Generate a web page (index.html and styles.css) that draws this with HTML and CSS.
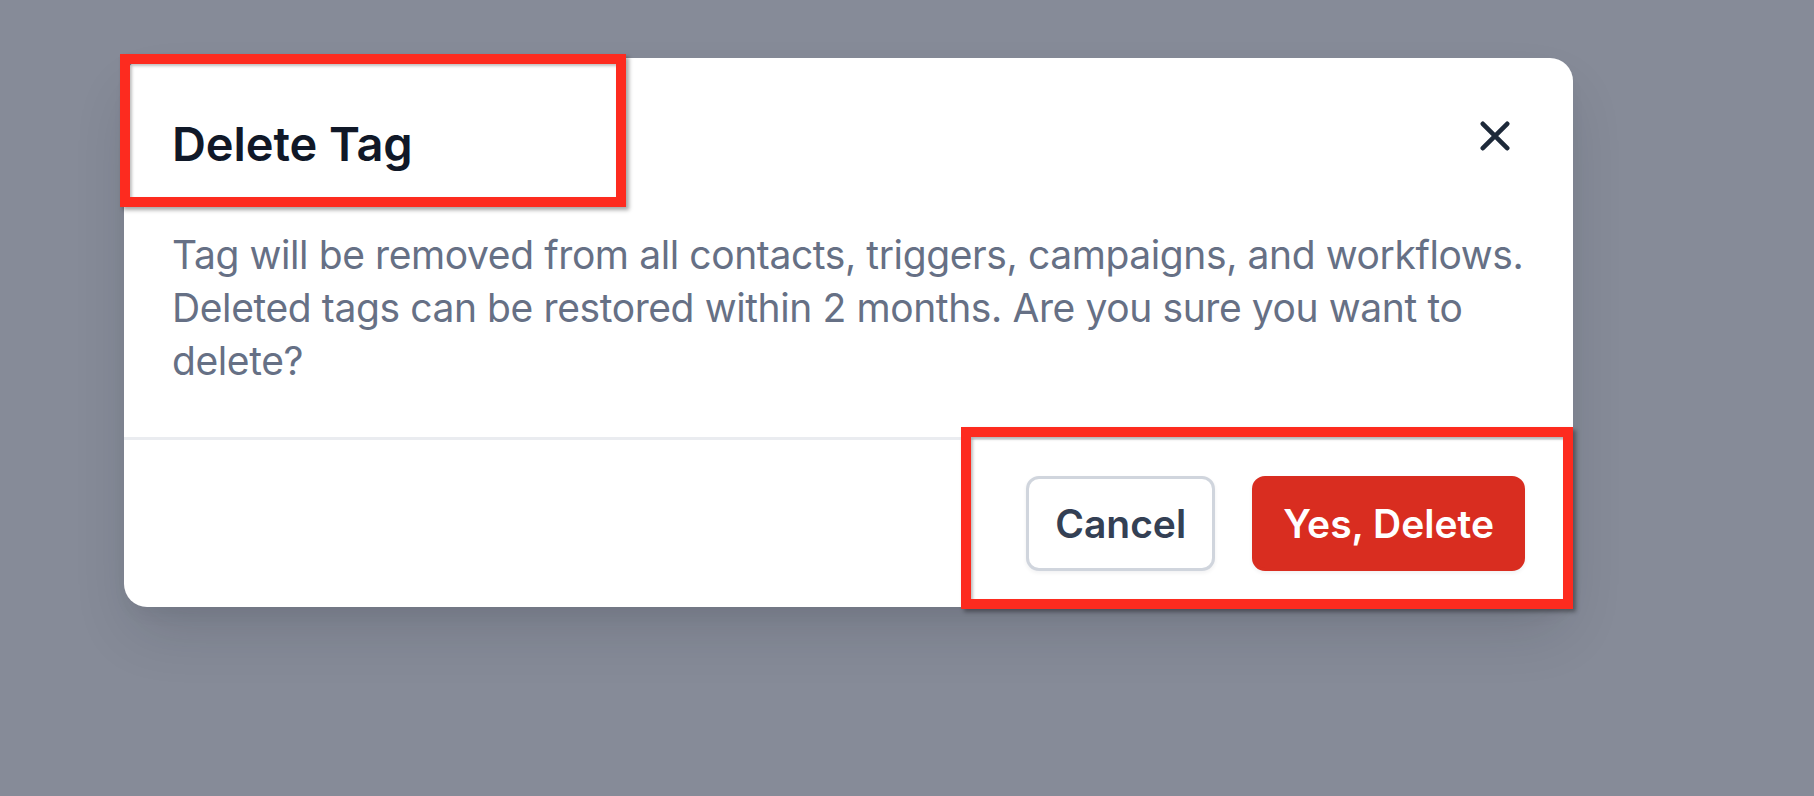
FILE: index.html
```html
<!DOCTYPE html>
<html lang="en">
<head>
<meta charset="utf-8">
<title>Delete Tag</title>
<link rel="stylesheet" href="styles.css">
</head>
<body>
<div class="backdrop">
  <div class="modal">
    <div class="modal-header">
      <h2 class="modal-title">Delete Tag</h2>
      <button class="close-btn" aria-label="Close">
        <svg width="30" height="30" viewBox="0 0 30 30" fill="none" stroke="#1d2939" stroke-width="4.6" stroke-linecap="round">
          <path d="M2.8 2.8L27.2 27.2M27.2 2.8L2.8 27.2"/>
        </svg>
      </button>
    </div>
    <p class="modal-body">Tag will be removed from all contacts, triggers, campaigns, and workflows. Deleted tags can be restored within 2 months. Are you sure you want to delete?</p>
    <div class="modal-footer">
      <button class="btn btn-secondary">Cancel</button>
      <button class="btn btn-danger">Yes, Delete</button>
    </div>
  </div>
  <div class="annot annot-title"></div>
  <div class="annot annot-footer"></div>
</div>
</body>
</html>
```

FILE: styles.css
```css
* { box-sizing: border-box; }
html, body {
  margin: 0;
  padding: 0;
  height: 100%;
}
body {
  background: #868b98;
  font-family: Inter, "Noto Sans", "Liberation Sans", sans-serif;
  overflow: hidden;
}
.backdrop {
  position: relative;
  height: 796px;
  padding: 58px 0 0 124px;
}
.modal {
  width: 1449px;
  height: 549px;
  background: #ffffff;
  border-radius: 23px;
  display: flex;
  flex-direction: column;
  box-shadow: 0 30px 60px -10px rgba(16, 24, 40, 0.16), 0 10px 20px -6px rgba(16, 24, 40, 0.06);
}
.modal-header {
  display: flex;
  justify-content: space-between;
  align-items: flex-start;
  padding: 58px 63px 0 48px;
}
.modal-title {
  margin: 0;
  font-size: 47px;
  line-height: 55px;
  font-weight: 600;
  color: #101828;
  letter-spacing: -0.1px;
}
.close-btn {
  margin-top: 5px;
  width: 30px;
  height: 30px;
  padding: 0;
  border: 0;
  background: none;
  display: flex;
}
.modal-body {
  margin: 57px 0 0 0;
  padding: 0 24px 0 48px;
  font-size: 39px;
  line-height: 53px;
  letter-spacing: -0.4px;
  color: #667085;
  flex: 1;
}
.modal-footer {
  border-top: 3px solid #eaecf0;
  padding: 36px 48px;
  display: flex;
  justify-content: flex-end;
  gap: 37px;
}
.btn {
  height: 95px;
  border-radius: 13px;
  border: 3px solid;
  font-family: inherit;
  font-size: 39px;
  font-weight: 600;
  display: inline-flex;
  align-items: center;
  box-shadow: 0 2px 4px rgba(16, 24, 40, 0.06);
}
.btn-secondary {
  padding: 0 26px;
  background: #ffffff;
  border-color: #d0d5dd;
  color: #344054;
}
.btn-danger {
  padding: 0 28px;
  background: #d92d20;
  border-color: #d92d20;
  color: #ffffff;
}
.annot {
  position: absolute;
  border: 10px solid #fd2b1f;
  box-shadow: 3px 3px 4px rgba(0, 0, 0, 0.35), inset 2px 2px 3px rgba(0, 0, 0, 0.25);
  pointer-events: none;
}
.annot-title {
  left: 120px;
  top: 54px;
  width: 506px;
  height: 153px;
}
.annot-footer {
  left: 961px;
  top: 427px;
  width: 612px;
  height: 182px;
}
```
